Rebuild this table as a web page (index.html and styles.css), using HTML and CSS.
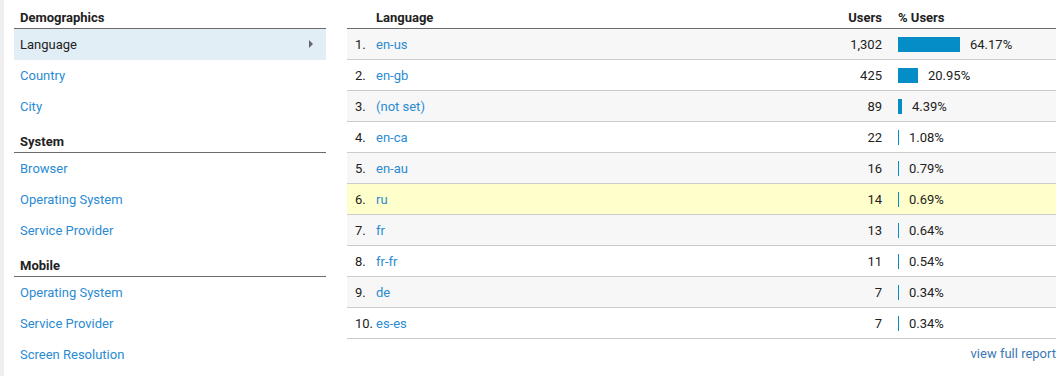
FILE: index.html
```html
<!DOCTYPE html>
<html>
<head>
<meta charset="utf-8">
<link rel="stylesheet" href="styles.css">
</head>
<body>
<div class="page">
  <div class="strip"></div>
  <nav class="side">
    <div class="side-head first">Demographics</div>
    <div class="side-item active"><span>Language</span><span class="arrow"></span></div>
    <div class="side-item"><a>Country</a></div>
    <div class="side-item"><a>City</a></div>
    <div class="side-head">System</div>
    <div class="side-item"><a>Browser</a></div>
    <div class="side-item"><a>Operating System</a></div>
    <div class="side-item"><a>Service Provider</a></div>
    <div class="side-head">Mobile</div>
    <div class="side-item"><a>Operating System</a></div>
    <div class="side-item"><a>Service Provider</a></div>
    <div class="side-item"><a>Screen Resolution</a></div>
  </nav>
  <section class="report">
    <table class="data">
      <colgroup>
        <col class="c-num"><col class="c-lang"><col class="c-users"><col class="c-pct">
      </colgroup>
      <thead>
        <tr><th></th><th class="h-lang">Language</th><th class="h-users">Users</th><th class="h-pct">% Users</th></tr>
      </thead>
      <tbody>
        <tr class="odd"><td class="num">1.</td><td><a>en-us</a></td><td class="users">1,302</td><td class="pct"><span class="bar" style="width:62px"></span>64.17%</td></tr>
        <tr><td class="num">2.</td><td><a>en-gb</a></td><td class="users">425</td><td class="pct"><span class="bar" style="width:20px"></span>20.95%</td></tr>
        <tr class="odd"><td class="num">3.</td><td><a>(not set)</a></td><td class="users">89</td><td class="pct"><span class="bar" style="width:4px"></span>4.39%</td></tr>
        <tr><td class="num">4.</td><td><a>en-ca</a></td><td class="users">22</td><td class="pct"><span class="bar" style="width:1px"></span>1.08%</td></tr>
        <tr class="odd"><td class="num">5.</td><td><a>en-au</a></td><td class="users">16</td><td class="pct"><span class="bar" style="width:1px"></span>0.79%</td></tr>
        <tr class="hl"><td class="num">6.</td><td><a>ru</a></td><td class="users">14</td><td class="pct"><span class="bar" style="width:1px"></span>0.69%</td></tr>
        <tr class="odd"><td class="num">7.</td><td><a>fr</a></td><td class="users">13</td><td class="pct"><span class="bar" style="width:1px"></span>0.64%</td></tr>
        <tr><td class="num">8.</td><td><a>fr-fr</a></td><td class="users">11</td><td class="pct"><span class="bar" style="width:1px"></span>0.54%</td></tr>
        <tr class="odd"><td class="num">9.</td><td><a>de</a></td><td class="users">7</td><td class="pct"><span class="bar" style="width:1px"></span>0.34%</td></tr>
        <tr><td class="num">10.</td><td><a>es-es</a></td><td class="users">7</td><td class="pct"><span class="bar" style="width:1px"></span>0.34%</td></tr>
      </tbody>
    </table>
    <div class="more"><a>view full report</a></div>
  </section>
</div>
</body>
</html>
```
FILE: styles.css
```css
html, body {
  margin: 0;
  padding: 0;
  background: #fff;
}
body {
  font-family: Roboto, "Liberation Sans", Arial, sans-serif;
  font-size: 13px;
  color: #222;
}
a {
  color: #2a8bd3;
  text-decoration: none;
}
.page {
  display: flex;
  align-items: flex-start;
  height: 376px;
}
.strip {
  width: 4px;
  align-self: stretch;
  background: #efefef;
  flex: none;
}
.side {
  width: 312px;
  margin-left: 10px;
  flex: none;
}
.side-head {
  font-weight: bold;
  line-height: 16px;
  padding: 12px 6px 2px;
  border-bottom: 1px solid #6b6b6b;
}
.side-head.first {
  padding-top: 10px;
}
.side-item {
  height: 31px;
  line-height: 31px;
  padding: 0 6px;
  display: flex;
  align-items: center;
  justify-content: space-between;
}
.side-item.active {
  background: #e2eef6;
  color: #222;
}
.arrow {
  width: 0;
  height: 0;
  border-left: 4px solid #666;
  border-top: 4px solid transparent;
  border-bottom: 4px solid transparent;
  margin-right: 7px;
  margin-top: -1px;
}
.report {
  margin-left: 21px;
  width: 709px;
  flex: none;
}
.data {
  width: 100%;
  border-collapse: collapse;
  table-layout: fixed;
}
.c-num { width: 29px; }
.c-users { width: 100px; }
.c-pct { width: 158px; }
.data th {
  font-weight: bold;
  text-align: left;
  height: 28px;
  line-height: 16px;
  padding: 10px 0 2px;
  box-sizing: border-box;
  vertical-align: bottom;
  border-bottom: 1px solid #6b6b6b;
}
.data th.h-users {
  text-align: right;
  padding-right: 16px;
}
.data td {
  height: 30px;
  padding: 0;
  border-bottom: 1px solid #cbcbcb;
  white-space: nowrap;
}
.data tr.odd td { background: #f7f7f7; }
.data tr.hl td { background: #ffffcc; }
.data td.num {
  padding-left: 8px;
}
.data td.users {
  text-align: right;
  padding-right: 16px;
}
.bar {
  display: inline-block;
  height: 15px;
  background: #058dc7;
  vertical-align: -3px;
  margin-right: 10px;
}
.more {
  text-align: right;
  padding-top: 7px;
  line-height: 16px;
}
.more a {
  color: #3c78b4;
}
```
